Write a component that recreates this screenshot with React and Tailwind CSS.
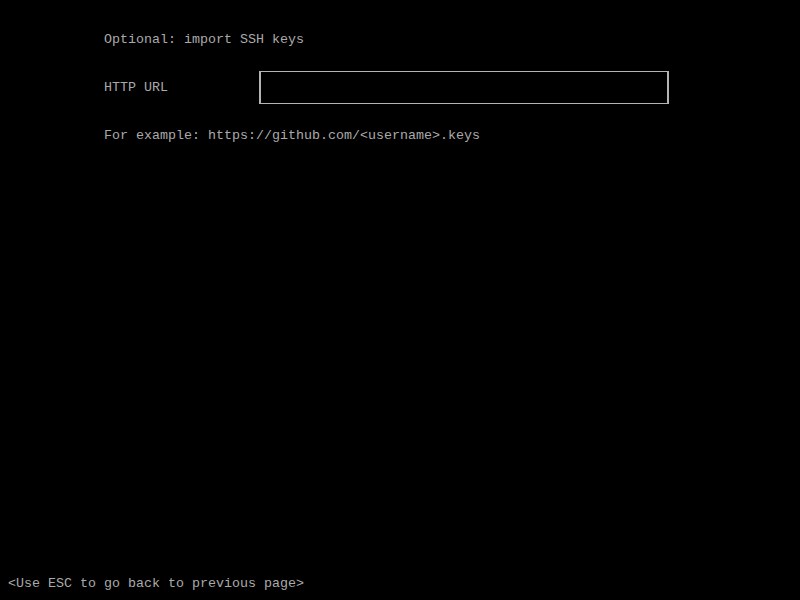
export default function App() {
    return (
        <div
            className="w-[800px] h-[600px] bg-black text-[#aaaaaa] flex flex-col"
            style={{ fontFamily: '"Liberation Mono", "DejaVu Sans Mono", monospace' }}
        >
            <div className="flex flex-col pl-[104px] pt-8 text-[13.333px] leading-4">
                <div className="h-4 whitespace-pre">Optional: import SSH keys</div>
                <div className="flex items-center mt-[23px]">
                    <div className="w-[155px] whitespace-pre">HTTP URL</div>
                    <div className="w-[410px] h-[33px] border-x-2 border-y border-[#b4b4b4]"></div>
                </div>
                <div className="h-4 mt-6 whitespace-pre">For example: https://github.com/&lt;username&gt;.keys</div>
            </div>
            <div className="mt-auto pl-2 pb-2 h-6 text-[13.333px] leading-4 whitespace-pre">
                &lt;Use ESC to go back to previous page&gt;
            </div>
        </div>
    );
}
